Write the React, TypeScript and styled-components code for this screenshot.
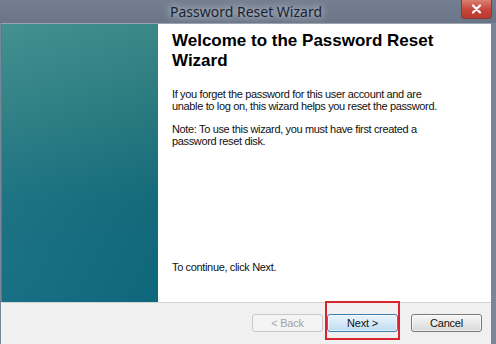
import React from "react";
import styled, { createGlobalStyle } from "styled-components";

const GlobalStyle = createGlobalStyle`
  html, body {
    margin: 0;
    padding: 0;
    background: #7c8697;
  }
  * {
    box-sizing: border-box;
  }
`;

const Window = styled.div`
  width: 496px;
  height: 344px;
  display: flex;
  flex-direction: column;
  background: #7a8596;
  padding: 0 5px 0 1px;
  overflow: hidden;
`;

const TitleBar = styled.div`
  position: relative;
  height: 23px;
  flex-shrink: 0;
  display: flex;
  align-items: center;
  justify-content: center;
  background: linear-gradient(to bottom, #737e90, #6a7587);
  margin: 0 -5px 0 -1px;
`;

const Title = styled.span`
  font-family: "Noto Sans", "DejaVu Sans", sans-serif;
  font-size: 14px;
  color: #1c2230;
  padding: 0 8px;
  margin-right: 4px;
  text-shadow: 0 0 6px #c9d0da, 0 0 10px #b8c0cc;
`;

const CloseButton = styled.div`
  position: absolute;
  top: 0;
  right: 4px;
  width: 31px;
  height: 19px;
  border-radius: 0 0 4px 4px;
  background: linear-gradient(to bottom, #d9806f, #c7443a 55%, #b83a30);
  border: 1px solid #8a3a35;
  border-top: none;
  display: flex;
  align-items: center;
  justify-content: center;
`;

const Body = styled.div`
  flex: 1;
  display: flex;
  min-height: 0;
  border-top: 1px solid #9aa3b0;
`;

const Sidebar = styled.div`
  width: 157px;
  flex-shrink: 0;
  background:
    linear-gradient(to right, rgba(255, 255, 255, 0.04), rgba(0, 0, 0, 0.03)),
    linear-gradient(to bottom, #3d8c8c 0%, #2a7d82 30%, #146d7e 65%, #0f6a80 100%);
  border-left: 1px solid #5d7a80;
`;

const Content = styled.div`
  flex: 1;
  background: #ffffff;
  padding: 7px 14px 29px 14px;
  display: flex;
  flex-direction: column;
`;

const Heading = styled.h1`
  margin: 0 0 17px 0;
  font-family: "Liberation Sans", Arial, sans-serif;
  font-size: 17px;
  font-weight: bold;
  line-height: 20px;
  color: #000;
`;

const Paragraph = styled.p`
  margin: 0 0 11px 0;
  font-family: "Liberation Sans", Arial, sans-serif;
  font-size: 11px;
  letter-spacing: -0.35px;
  line-height: 12px;
  color: #111;

  &:last-child {
    margin-bottom: 0;
  }
`;

const Spacer = styled.div`
  flex: 1;
`;

const Footer = styled.div`
  height: 42px;
  flex-shrink: 0;
  background: #f0f0f0;
  border-top: 1px solid #d3d3d3;
  display: flex;
  align-items: center;
  justify-content: flex-end;
  padding: 0 9px 1px 0;
`;

const ButtonGroup = styled.div`
  display: flex;
  gap: 4px;
  margin-right: 13px;
`;

const Highlight = styled.div`
  position: relative;
  display: flex;
`;

const HighlightFrame = styled.span`
  position: absolute;
  left: -2px;
  right: -2px;
  top: -13px;
  bottom: -8px;
  border: 2px solid #d8242e;
  pointer-events: none;
`;

const Button = styled.button<{ $variant?: "default" | "primary" | "disabled" }>`
  width: 71px;
  height: 18px;
  padding: 0;
  font-family: "Liberation Sans", Arial, sans-serif;
  font-size: 11px;
  letter-spacing: -0.2px;
  border-radius: 3px;
  border: 1px solid
    ${(p) =>
      p.$variant === "primary" ? "#3c7fb1" : p.$variant === "disabled" ? "#c9c9c9" : "#7a7a7a"};
  color: ${(p) => (p.$variant === "disabled" ? "#a3a3a3" : "#111")};
  background: ${(p) =>
    p.$variant === "primary"
      ? "linear-gradient(to bottom, #eaf4fc, #d6e9f7 50%, #bedcf2)"
      : p.$variant === "disabled"
      ? "#f4f4f4"
      : "linear-gradient(to bottom, #f6f6f6, #e8e8e8 50%, #d8d8d8)"};
  box-shadow: ${(p) => (p.$variant === "disabled" ? "none" : "inset 0 0 0 1px rgba(255,255,255,0.6)")};
`;

export default function App() {
  return (
    <>
      <GlobalStyle />
      <Window>
        <TitleBar>
          <Title>Password Reset Wizard</Title>
          <CloseButton>
            <svg width="11" height="10" viewBox="0 0 11 10">
              <path d="M2 1.5 L9 8.5 M9 1.5 L2 8.5" stroke="#fff" strokeWidth="2.2" strokeLinecap="round" />
            </svg>
          </CloseButton>
        </TitleBar>
        <Body>
          <Sidebar />
          <Content>
            <Heading>
              Welcome to the Password Reset
              <br />
              Wizard
            </Heading>
            <Paragraph>
              If you forget the password for this user account and are
              <br />
              unable to log on, this wizard helps you reset the password.
            </Paragraph>
            <Paragraph>
              Note: To use this wizard, you must have first created a
              <br />
              password reset disk.
            </Paragraph>
            <Spacer />
            <Paragraph>To continue, click Next.</Paragraph>
          </Content>
        </Body>
        <Footer>
          <ButtonGroup>
            <Button $variant="disabled">&lt; Back</Button>
            <Highlight>
              <Button $variant="primary">Next &gt;</Button>
              <HighlightFrame />
            </Highlight>
          </ButtonGroup>
          <Button>Cancel</Button>
        </Footer>
      </Window>
    </>
  );
}
